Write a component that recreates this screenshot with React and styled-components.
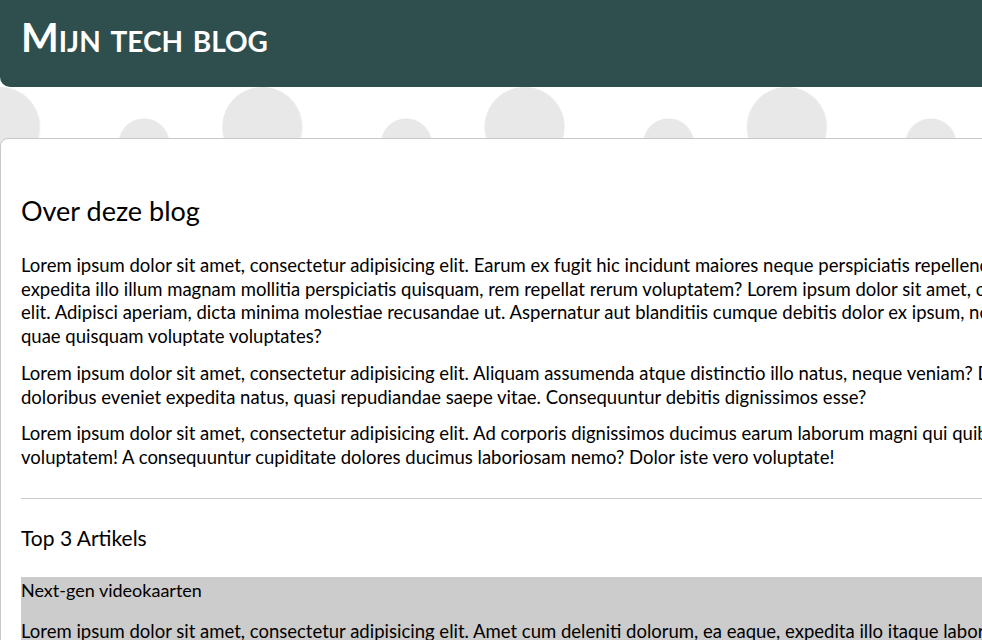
import React from 'react';
import styled, { createGlobalStyle } from 'styled-components';

const GlobalStyle = createGlobalStyle`
  html, body {
    margin: 0;
    padding: 0;
  }
  body {
    font-family: Lato, 'Liberation Sans', sans-serif;
    color: #000;
    background: #fff;
    overflow: hidden;
  }
`;

// achtergrond met cirkels
const Page = styled.div`
  width: 1300px;
  min-height: 640px;
  background-color: #fff;
  background-image: radial-gradient(circle at 131px 127px, #e8e8e8 39.5px, transparent 40.5px),
    radial-gradient(circle at 131px 144px, #e8e8e8 25px, transparent 26px);
  background-size: 262.3px 300px, 262.3px 300px;
  background-position: -131px 0, 13px 0;
  background-repeat: repeat-x;
`;

const Header = styled.header`
  height: 87px;
  box-sizing: border-box;
  padding: 13px 21px 0;
  background-color: #2f4f4f;
  border-radius: 0 0 10px 10px;
`;

const SiteTitle = styled.h1`
  margin: 0;
  color: #fff;
  font-size: 40px;
  font-weight: 700;
  font-variant: small-caps;
`;

const Card = styled.main`
  margin-top: 51px;
  background: #fff;
  border: 1px solid #c8c8c8;
  border-radius: 8px;
  padding: 55px 20px 40px;
`;

const Title = styled.h2`
  margin: 0 0 27px;
  font-size: 27px;
  font-weight: 400;
`;

const Text = styled.p`
  margin: 0 0 13px;
  font-size: 18.5px;
  line-height: 23.7px;
  white-space: nowrap;
`;

const Divider = styled.hr`
  border: none;
  border-top: 1px solid #ccc;
  margin: 28px 0 26px;
`;

const SubTitle = styled.h3`
  margin: 0 0 27px;
  font-size: 21px;
  font-weight: 400;
`;

const Article = styled.article`
  background: #ccc;
`;

const ArticleTitle = styled.h4`
  margin: 0 0 17px;
  font-size: 18px;
  font-weight: 400;
  line-height: 26px;
`;

export default function App() {
  return (
    <Page>
      <GlobalStyle />
      <Header>
        <SiteTitle>Mijn tech blog</SiteTitle>
      </Header>

      <Card>
        <Title>Over deze blog</Title>
        <Text>
          Lorem ipsum dolor sit amet, consectetur adipisicing elit. Earum ex fugit hic incidunt maiores neque perspiciatis repellendus, nobis
          <br />
          expedita illo illum magnam mollitia perspiciatis quisquam, rem repellat rerum voluptatem? Lorem ipsum dolor sit amet, consectetur adipisicing
          <br />
          elit. Adipisci aperiam, dicta minima molestiae recusandae ut. Aspernatur aut blanditiis cumque debitis dolor ex ipsum, neque nulla
          <br />
          quae quisquam voluptate voluptates?
        </Text>
        <Text>
          Lorem ipsum dolor sit amet, consectetur adipisicing elit. Aliquam assumenda atque distinctio illo natus, neque veniam? Dolorum,
          <br />
          doloribus eveniet expedita natus, quasi repudiandae saepe vitae. Consequuntur debitis dignissimos esse?
        </Text>
        <Text>
          Lorem ipsum dolor sit amet, consectetur adipisicing elit. Ad corporis dignissimos ducimus earum laborum magni qui quibusdam
          <br />
          voluptatem! A consequuntur cupiditate dolores ducimus laboriosam nemo? Dolor iste vero voluptate!
        </Text>

        <Divider />

        <SubTitle>Top 3 Artikels</SubTitle>
        <Article>
          <ArticleTitle>Next-gen videokaarten</ArticleTitle>
          <Text>
            Lorem ipsum dolor sit amet, consectetur adipisicing elit. Amet cum deleniti dolorum, ea eaque, expedita illo itaque laboriosam
          </Text>
        </Article>
      </Card>
    </Page>
  );
}
